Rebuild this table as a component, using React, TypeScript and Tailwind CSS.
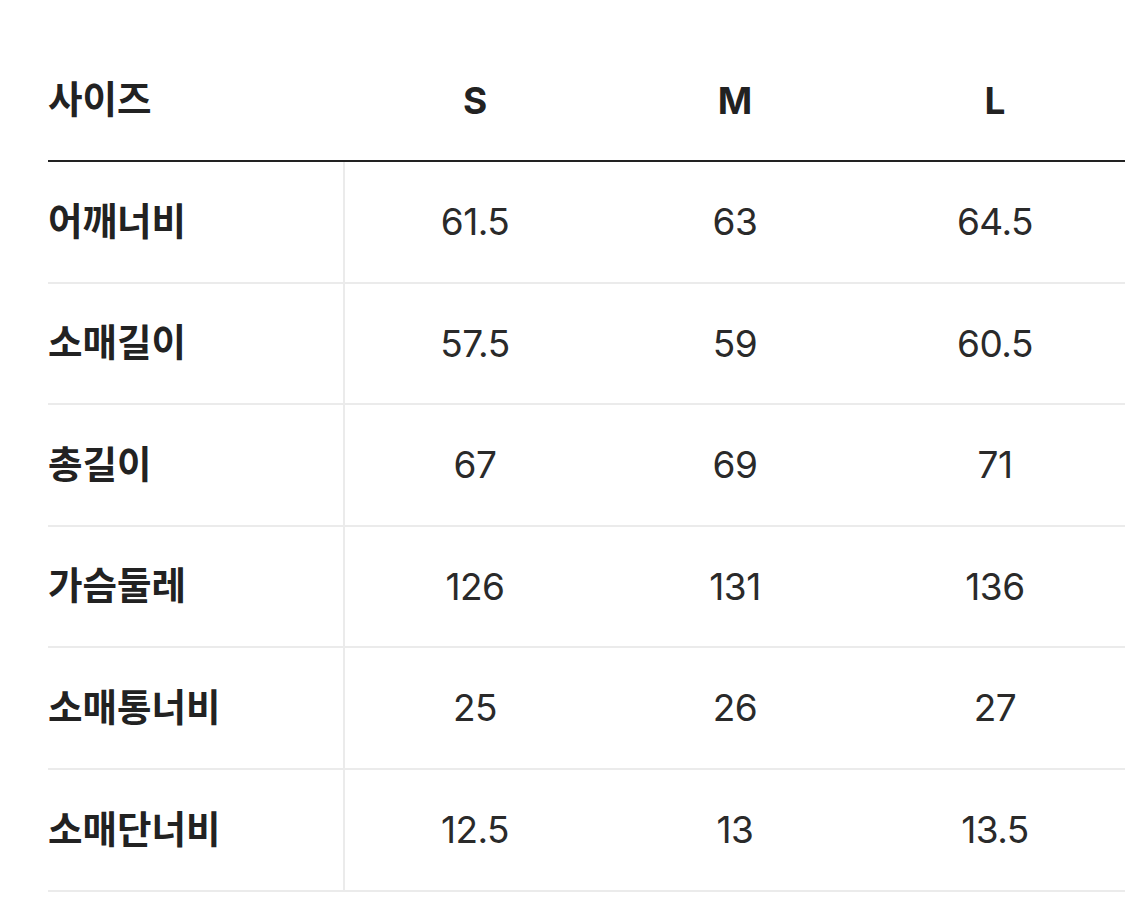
import React from 'react';

const sizes = ['S', 'M', 'L'];

const rows: { label: string; values: string[] }[] = [
  { label: '어깨너비', values: ['61.5', '63', '64.5'] },
  { label: '소매길이', values: ['57.5', '59', '60.5'] },
  { label: '총길이', values: ['67', '69', '71'] },
  { label: '가슴둘레', values: ['126', '131', '136'] },
  { label: '소매통너비', values: ['25', '26', '27'] },
  { label: '소매단너비', values: ['12.5', '13', '13.5'] },
];

export default function App() {
  return (
    <div
      className="w-[1125px] h-[915px] bg-white pl-[48px] pt-[41px] overflow-hidden"
      style={{ fontFamily: '"Inter", "Noto Sans CJK KR", sans-serif' }}
    >
      <div className="w-[1077px]">
        {/* Header */}
        <div className="grid grid-cols-[297px_260px_260px_260px] h-[121px] border-b-2 border-[#222]">
          <div className="flex items-center text-[37.5px] font-bold text-[#222]">사이즈</div>
          {sizes.map((s) => (
            <div key={s} className="flex items-center justify-center text-[37px] font-bold text-[#222]">
              {s}
            </div>
          ))}
        </div>

        {/* Body */}
        {rows.map((row) => (
          <div
            key={row.label}
            className="grid grid-cols-[297px_260px_260px_260px] h-[121.6px] border-b-2 border-[#ebebeb]"
          >
            <div className="flex items-center text-[37.5px] font-bold text-[#222] border-r-2 border-[#ebebeb]">
              {row.label}
            </div>
            {row.values.map((v, i) => (
              <div key={i} className="flex items-center justify-center text-[37px] text-[#2a2a2a] tracking-[-0.5px]">
                {v}
              </div>
            ))}
          </div>
        ))}
      </div>
    </div>
  );
}
